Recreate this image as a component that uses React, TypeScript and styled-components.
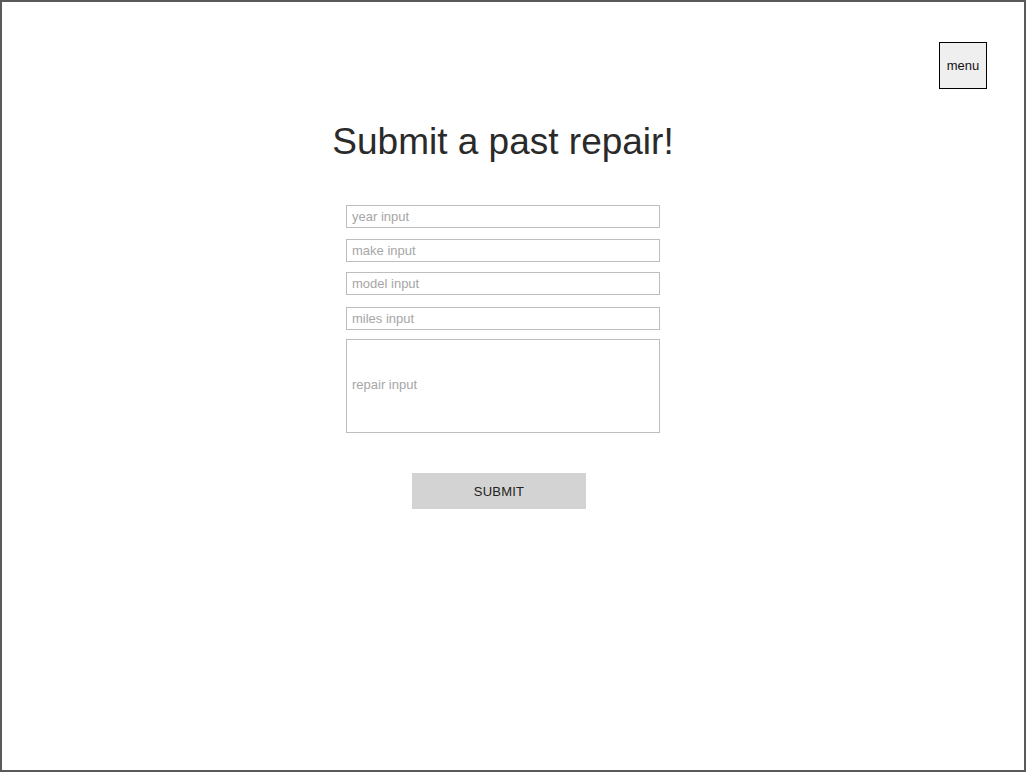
import styled, { createGlobalStyle } from 'styled-components'

const GlobalStyle = createGlobalStyle`
    html, body {
        margin: 0;
        padding: 0;
        background: #fff;
        font-family: "Liberation Sans", Arial, sans-serif;
    }
`

const Frame = styled.div`
    width: 1026px;
    height: 772px;
    box-sizing: border-box;
    border: 2px solid #5a5a5a;
    display: flex;
    flex-direction: column;
`

const TopBar = styled.div`
    display: flex;
    justify-content: flex-end;
    padding: 40px 37px 0 0;
`

const MenuButton = styled.button`
    width: 48px;
    height: 47px;
    box-sizing: border-box;
    border: 1px solid #000;
    background: #efefef;
    color: #111;
    font-family: "Liberation Sans", Arial, sans-serif;
    font-size: 13px;
    padding: 0;
`

const Main = styled.div`
    width: 314px;
    margin-left: 344px;
    display: flex;
    flex-direction: column;
`

const Title = styled.h1`
    margin: 32px -60px 0;
    font-size: 37px;
    font-weight: normal;
    color: #2a2a2a;
    text-align: center;
    line-height: 42px;
`

const Field = styled.input<{ $gap: number }>`
    margin-top: ${p => p.$gap}px;
    height: 23px;
    box-sizing: border-box;
    border: 1px solid #bdbdbd;
    padding: 0 5px;
    font-family: "Liberation Sans", Arial, sans-serif;
    font-size: 13px;
    color: #333;
    outline: none;
    &::placeholder { color: #a6a6a6; }
`

const RepairBox = styled.textarea`
    margin-top: 9px;
    height: 94px;
    box-sizing: border-box;
    border: 1px solid #bdbdbd;
    padding: 37px 5px 0;
    font-family: "Liberation Sans", Arial, sans-serif;
    font-size: 13px;
    line-height: 15px;
    resize: none;
    outline: none;
    &::placeholder { color: #a6a6a6; }
`

const SubmitButton = styled.button`
    margin: 40px 0 0 66px;
    width: 174px;
    height: 36px;
    border: none;
    background: #d3d3d3;
    color: #222;
    font-family: "Liberation Sans", Arial, sans-serif;
    font-size: 13px;
    letter-spacing: 0.2px;
`

const fields = [
    { name: 'year', gap: 42 },
    { name: 'make', gap: 11 },
    { name: 'model', gap: 10 },
    { name: 'miles', gap: 12 },
]

export default function App() {
    return (
        <>
            <GlobalStyle />
            <Frame>
                <TopBar>
                    <MenuButton>menu</MenuButton>
                </TopBar>
                <Main>
                    <Title>Submit a past repair!</Title>
                    {fields.map(f => (
                        <Field key={f.name} $gap={f.gap} placeholder={`${f.name} input`} />
                    ))}
                    <RepairBox placeholder="repair input" />
                    <SubmitButton>SUBMIT</SubmitButton>
                </Main>
            </Frame>
        </>
    )
}
